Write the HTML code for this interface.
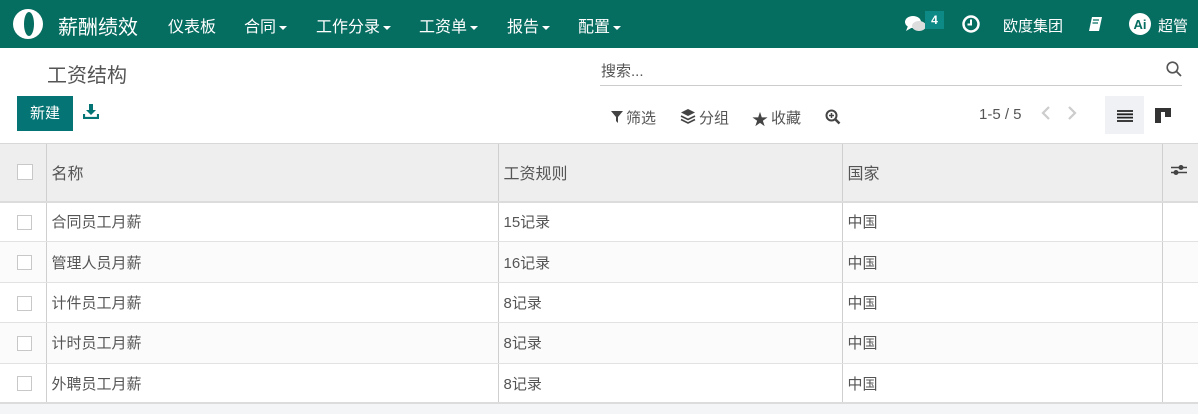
<!DOCTYPE html>
<html><head><meta charset="utf-8"><style>
*{box-sizing:border-box;margin:0;padding:0}
body{width:1198px;height:414px;overflow:hidden;background:#f4f5f7;font-family:"Liberation Sans","Noto Sans CJK SC",sans-serif;color:#4c4c4c;font-size:15px;position:relative}
.nav{position:absolute;left:0;top:0;width:1198px;height:48px;background:#066d61;color:#fff}
.nav span{position:absolute;top:13px;font-size:16px;white-space:nowrap}
.caret{display:inline-block;border-left:4px solid transparent;border-right:4px solid transparent;border-top:4px solid #fff;vertical-align:middle;margin-left:3px}
.cp{position:absolute;left:0;top:48px;width:1198px;height:95px;background:#fff}
.abs{position:absolute;white-space:nowrap}
table{position:absolute;left:0;top:143px;width:1198px;border-collapse:collapse;background:#fff}
th{height:58px;background:#eeeeee;font-weight:normal;text-align:left;font-size:16px;color:#555;border-top:1px solid #d8d8d8;border-bottom:2px solid #dcdcdc;padding-left:5px}
td{height:40.4px;border-bottom:1px solid #e2e2e2;padding-left:5px;font-size:15px;color:#555}
tr:nth-child(odd) td{background:#fbfbfb}
th+th,td+td{border-left:1px solid #cfcfcf}
.cb{display:inline-block;width:15px;height:15px;border:1px solid #c8c8c8;background:#fff;margin-left:12px;vertical-align:middle}
</style></head><body>
<div class="nav">
<svg style="position:absolute;left:12px;top:8px" width="32" height="32" viewBox="0 0 32 32"><circle cx="16" cy="16" r="15" fill="#fff"/><ellipse cx="17" cy="16" rx="5" ry="12" fill="#066d61"/></svg>
<span style="left:58px;font-size:20px;top:11px">薪酬绩效</span>
<span style="left:168px">仪表板</span>
<span style="left:244px">合同<i class="caret"></i></span>
<span style="left:316px">工作分录<i class="caret"></i></span>
<span style="left:419px">工资单<i class="caret"></i></span>
<span style="left:507px">报告<i class="caret"></i></span>
<span style="left:578px">配置<i class="caret"></i></span>
<svg style="position:absolute;left:905px;top:15px" width="22" height="18" viewBox="0 0 22 18"><ellipse cx="8" cy="7" rx="8" ry="6" fill="#fff"/><ellipse cx="14" cy="11" rx="7" ry="5" fill="#ddd"/><path d="M3 11 L1 16 L8 12Z" fill="#fff"/></svg>
<div class="abs" style="left:925px;top:11px;width:19px;height:18px;background:#0e8a86;font-size:12px;text-align:center;line-height:18px;font-weight:bold">4</div>
<svg style="position:absolute;left:962px;top:15px" width="18" height="18" viewBox="0 0 18 18"><circle cx="9" cy="9" r="7.5" fill="none" stroke="#fff" stroke-width="2.5"/><path d="M9 4.5V9.5H5.5" stroke="#fff" stroke-width="2" fill="none"/></svg>
<span style="left:1003px;font-size:15px;top:15px">欧度集团</span>
<svg style="position:absolute;left:1088px;top:16px" width="16" height="16" viewBox="0 0 16 16"><path d="M4 1H14L11 15H1Z" fill="#fff"/><path d="M5 4H11M4.5 7H10" stroke="#066d61" stroke-width="1.2"/></svg>
<svg style="position:absolute;left:1129px;top:13px" width="22" height="22" viewBox="0 0 22 22"><circle cx="11" cy="11" r="11" fill="#fff"/><text x="11" y="16" font-size="13" font-weight="bold" text-anchor="middle" fill="#066d61" font-family="Liberation Sans">Ai</text></svg>
<span style="left:1158px;font-size:15px;top:15px">超管</span>
</div>
<div class="cp">
<div class="abs" style="left:47px;top:11px;font-size:20px;color:#555">工资结构</div>
<div class="abs" style="left:600px;top:37px;width:582px;border-bottom:1px solid #ccc;height:1px"></div>
<div class="abs" style="left:601px;top:12px;font-size:15px;color:#555">搜索...</div>
<svg style="position:absolute;left:1166px;top:13px" width="16" height="16" viewBox="0 0 16 16"><circle cx="6.5" cy="6.5" r="5.3" fill="none" stroke="#555" stroke-width="1.6"/><path d="M10.5 10.5L15 15" stroke="#555" stroke-width="1.8"/></svg>
<div class="abs" style="left:17px;top:48px;width:56px;height:35px;background:#047474;color:#fff;font-size:15px;text-align:center;line-height:35px">新建</div>
<svg style="position:absolute;left:83px;top:56px" width="16" height="15" viewBox="0 0 16 15"><path d="M6 0H10V6H13L8 11L3 6H6Z" fill="#047474"/><path d="M1 10V14H15V10" stroke="#047474" stroke-width="2.2" fill="none"/></svg>
<svg style="position:absolute;left:611px;top:63px" width="12" height="12" viewBox="0 0 12 12"><path d="M0 0H12L7 6V12L5 10V6Z" fill="#444"/></svg>
<div class="abs" style="left:626px;top:59px;color:#555">筛选</div>
<svg style="position:absolute;left:680px;top:60px" width="16" height="16" viewBox="0 0 16 16"><path d="M8 1L15 4.5L8 8L1 4.5Z" fill="#444"/><path d="M1 8L8 11.5L15 8M1 11.5L8 15L15 11.5" stroke="#444" stroke-width="1.6" fill="none"/></svg>
<div class="abs" style="left:699px;top:59px;color:#555">分组</div>
<div class="abs" style="left:752px;top:58px;color:#444;font-size:16px">★</div>
<div class="abs" style="left:771px;top:59px;color:#555">收藏</div>
<svg style="position:absolute;left:825px;top:61px" width="16" height="16" viewBox="0 0 16 16"><circle cx="6.5" cy="6.5" r="5" fill="none" stroke="#444" stroke-width="2"/><path d="M10 10L14.5 14.5" stroke="#444" stroke-width="2.5"/><path d="M6.5 4V9M4 6.5H9" stroke="#444" stroke-width="1.5"/></svg>
<div class="abs" style="left:979px;top:58px;color:#555">1-5 / 5</div>
<svg style="position:absolute;left:1040px;top:58px" width="40" height="14" viewBox="0 0 40 14"><path d="M9 1L3 7L9 13M29 1L35 7L29 13" stroke="#ccc" stroke-width="2.2" fill="none"/></svg>
<div class="abs" style="left:1105px;top:48px;width:39px;height:38px;background:#f0f1f4"></div>
<svg style="position:absolute;left:1117px;top:62px" width="16" height="12" viewBox="0 0 16 12"><path d="M0 1H16M0 4.3H16M0 7.6H16M0 11H16" stroke="#222" stroke-width="1.8"/></svg>
<svg style="position:absolute;left:1155px;top:60px" width="16" height="15" viewBox="0 0 16 15"><rect x="0" y="0" width="16" height="4" fill="#333"/><rect x="0" y="0" width="6" height="15" fill="#333"/><rect x="10" y="0" width="6" height="9" fill="#333"/></svg>
</div>
<table>
<tr><th style="width:46px;padding:0"><span class="cb" style="margin-left:17px;width:16px;height:16px"></span></th><th style="width:452px">名称</th><th style="width:344px">工资规则</th><th style="width:320px">国家</th><th style="padding-left:8px"><svg width="16" height="14" viewBox="0 0 16 14"><path d="M0 4.5H16M0 9.5H16" stroke="#444" stroke-width="1.4"/><circle cx="10" cy="4.5" r="2.5" fill="#444"/><circle cx="5" cy="9.5" r="2.5" fill="#444"/></svg></th></tr>
<tr><td style="padding:0"><span class="cb" style="margin-left:17px"></span></td><td>合同员工月薪</td><td>15记录</td><td>中国</td><td></td></tr>
<tr><td style="padding:0"><span class="cb" style="margin-left:17px"></span></td><td>管理人员月薪</td><td>16记录</td><td>中国</td><td></td></tr>
<tr><td style="padding:0"><span class="cb" style="margin-left:17px"></span></td><td>计件员工月薪</td><td>8记录</td><td>中国</td><td></td></tr>
<tr><td style="padding:0"><span class="cb" style="margin-left:17px"></span></td><td>计时员工月薪</td><td>8记录</td><td>中国</td><td></td></tr>
<tr><td style="padding:0;border-bottom:2px solid #dcdcdc"><span class="cb" style="margin-left:17px"></span></td><td style="border-bottom:2px solid #dcdcdc">外聘员工月薪</td><td style="border-bottom:2px solid #dcdcdc">8记录</td><td style="border-bottom:2px solid #dcdcdc">中国</td><td style="border-bottom:2px solid #dcdcdc"></td></tr>
</table>
</body></html>
